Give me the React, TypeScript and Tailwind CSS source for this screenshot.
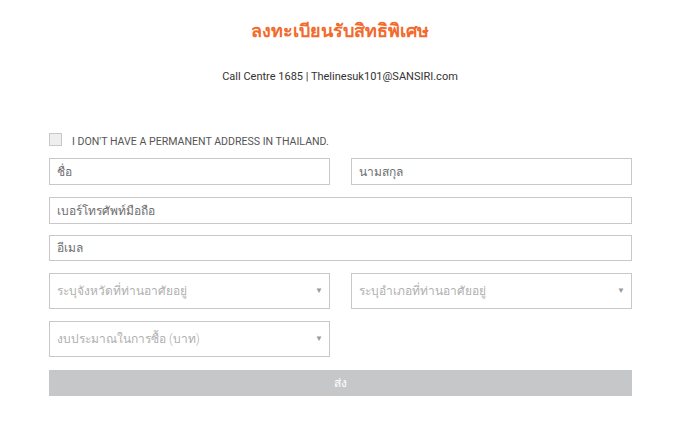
import React from "react";

const inputCls =
  "w-full border border-[#c8c8c8] bg-white px-[7px] text-[12px] font-light text-[#444] outline-none placeholder:text-[#6e6e6e]";

const Select: React.FC<{ label: string }> = ({ label }) => {
  return (
    <div className="flex h-[36px] items-center justify-between border border-[#c8c8c8] bg-white pl-[7px] pr-[6px]">
      <span className="text-[12px] font-light text-[#b0b0b0]">{label}</span>
      <span className="text-[8px] text-[#9a9a9a]">▼</span>
    </div>
  );
};

const App: React.FC = () => {
  return (
    <div className="min-h-[431px] w-[680px] bg-white font-['Roboto','Noto_Sans',sans-serif]">
      <div className="pt-[20px] text-center">
        <h1 className="text-[18px] font-bold leading-[22px] text-[#f26a2c]">
          ลงทะเบียนรับสิทธิพิเศษ
        </h1>
        <p className="mt-[27px] text-[11px] leading-[16px] text-[#333]">
          Call Centre 1685 | Thelinesuk101@SANSIRI.com
        </p>
      </div>

      <form className="ml-[49px] mt-[48px] w-[583px]">
        <label className="flex h-[12px] items-center">
          <span className="block h-[13px] w-[13px] border border-[#c8c8c8] bg-[#eeeeee]" />
          <span className="ml-[10px] mt-[5px] text-[10.6px] uppercase text-[#555]">
            I don't have a permanent address in Thailand.
          </span>
        </label>

        <div className="mt-[13px] grid grid-cols-2 gap-x-[21px]">
          <input className={`${inputCls} h-[27px]`} placeholder="ชื่อ" />
          <input className={`${inputCls} h-[27px]`} placeholder="นามสกุล" />
        </div>
        <input className={`${inputCls} mt-[12px] block h-[27px]`} placeholder="เบอร์โทรศัพท์มือถือ" />
        <input className={`${inputCls} mt-[11px] block h-[26px]`} placeholder="อีเมล" />

        <div className="mt-[12px] grid grid-cols-2 gap-x-[21px] gap-y-[12px]">
          <Select label="ระบุจังหวัดที่ท่านอาศัยอยู่" />
          <Select label="ระบุอำเภอที่ท่านอาศัยอยู่" />
          <Select label="งบประมาณในการซื้อ (บาท)" />
        </div>

        <button
          type="button"
          className="mt-[13px] block h-[26px] w-full bg-[#c6c7c9] text-[12px] text-white"
        >
          ส่ง
        </button>
      </form>
    </div>
  );
};

export default App;
